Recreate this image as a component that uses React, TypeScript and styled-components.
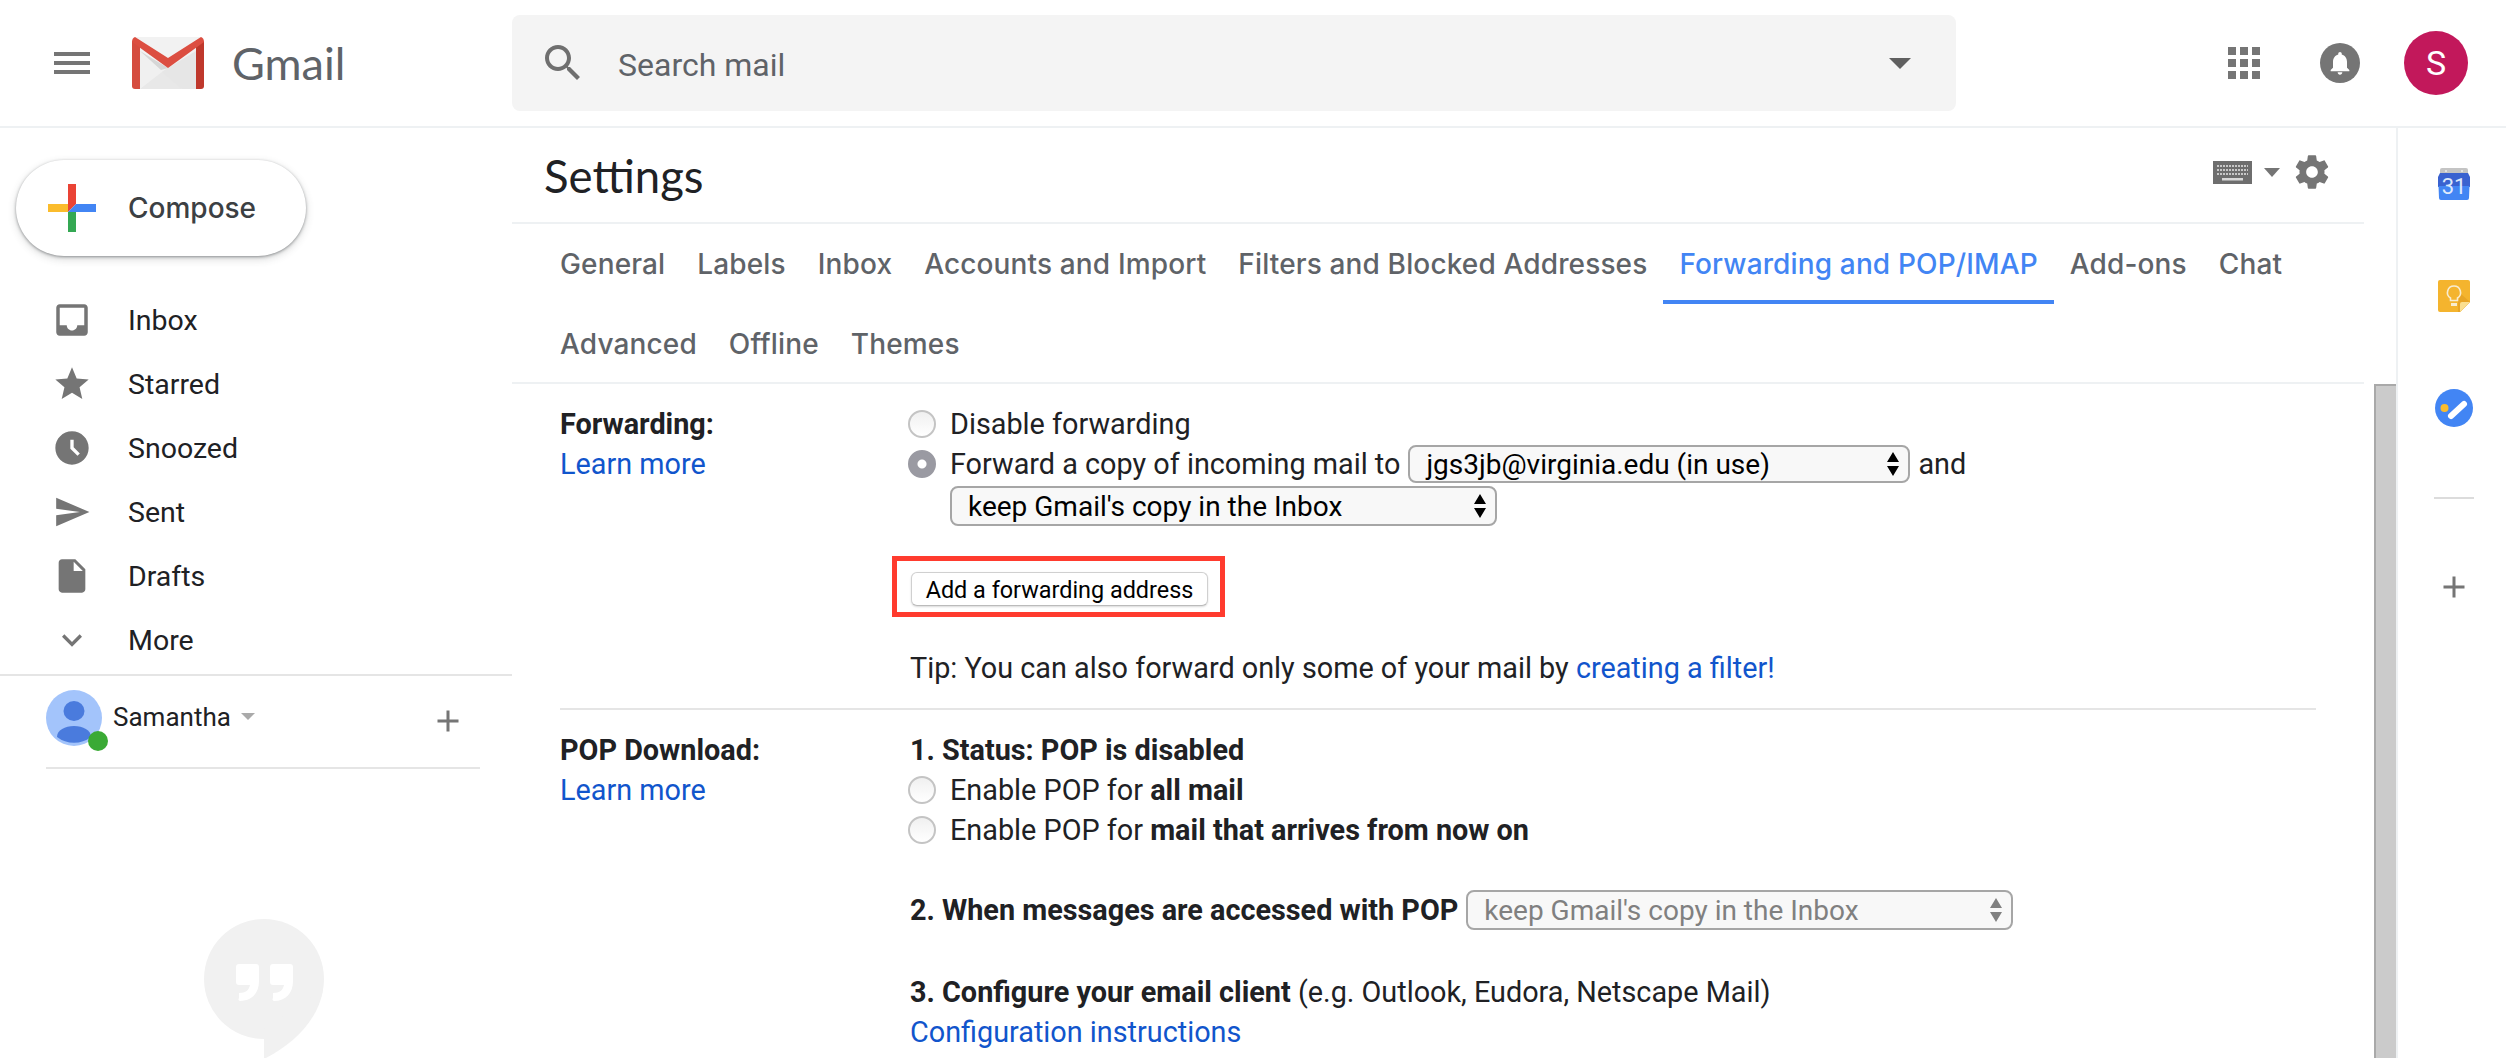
import styled, { createGlobalStyle } from 'styled-components';

const GlobalStyle = createGlobalStyle`
  html, body {
    margin: 0;
    padding: 0;
    background: #fff;
  }
  body {
    font-family: Roboto, "Liberation Sans", sans-serif;
    color: #202124;
  }
`;

const TABS = [
  'General',
  'Labels',
  'Inbox',
  'Accounts and Import',
  'Filters and Blocked Addresses',
  'Forwarding and POP/IMAP',
  'Add-ons',
  'Chat',
  'Advanced',
  'Offline',
  'Themes',
];

const NAV_ICONS: { label: string; size: number; d: string }[] = [
  {
    label: 'Inbox',
    size: 42,
    d: 'M19 3H4.99c-1.11 0-1.98.89-1.98 2L3 19c0 1.1.88 2 1.99 2H19c1.1 0 2-.9 2-2V5c0-1.11-.9-2-2-2zm0 12h-4c0 1.66-1.35 3-3 3s-3-1.34-3-3H4.99V5H19v10z',
  },
  {
    label: 'Starred',
    size: 40,
    d: 'M12 17.27L18.18 21l-1.64-7.03L22 9.24l-7.19-.61L12 2 9.19 8.63 2 9.24l5.46 4.73L5.82 21z',
  },
  {
    label: 'Snoozed',
    size: 40,
    d: 'M11.99 2C6.47 2 2 6.48 2 12s4.47 10 9.99 10C17.52 22 22 17.52 22 12S17.52 2 11.99 2zm3.3 14.71L11 12.41V7h2v4.59l3.71 3.71-1.42 1.41z',
  },
  { label: 'Sent', size: 38, d: 'M2.01 21L23 12 2.01 3 2 10l15 2-15 2z' },
  {
    label: 'Drafts',
    size: 40,
    d: 'M14 2H6c-1.1 0-2 .9-2 2v16c0 1.1.9 2 2 2h12c1.1 0 2-.9 2-2V8l-6-6zm-1 7V3.5L18.5 9H13z',
  },
  { label: 'More', size: 40, d: 'M7.41 8.59L12 13.17l4.59-4.58L18 10l-6 6-6-6z' },
];

const Icon = ({ d, size, color = '#757575' }: { d: string; size: number; color?: string }) => (
  <svg width={size} height={size} viewBox="0 0 24 24" fill={color}>
    <path d={d} />
  </svg>
);

const GmailLogo = () => (
  <svg width="72" height="52" viewBox="0 0 72 52">
    <rect x="2" width="68" height="52" rx="2" fill="#f2f2f2" />
    <path d="M8 52 L30 33 L36 31 L50 52Z" fill="#e8e8e8" />
    <path d="M8 14 L36 31 L30 35 L8 52Z" fill="#f0f0f0" />
    <path d="M36 31 L64 14 L64 52 L50 52 L30 35Z" fill="#e6e6e6" />
    <path d="M8 14 L36 31 L29 33Z" fill="#d6d6d6" />
    <path d="M0 4 L8 9 V52 H3 a3 3 0 0 1 -3 -3Z" fill="#d54c3f" />
    <path d="M72 4 L64 9 V52 H69 a3 3 0 0 0 3 -3Z" fill="#bf382c" />
    <path d="M3 0 L36 21 L69 0 Q72 1 72 5 L36 31 L0 5 Q0 1 3 0Z" fill="#dc4e41" />
  </svg>
);

const ComposePlus = () => (
  <svg width="48" height="48" viewBox="0 0 48 48">
    <path d="M20 0h8v20l-8 8z" fill="#ea4335" />
    <path d="M28 20h20v8H20z" fill="#4285f4" />
    <path d="M20 28h8v20h-8z" fill="#34a853" />
    <path d="M0 20h20v8H0z" fill="#fbbc2c" />
  </svg>
);

const UserAvatar = () => (
  <svg width="56" height="56" viewBox="0 0 56 56">
    <circle cx="28" cy="28" r="28" fill="#a3c4fb" />
    <ellipse cx="28" cy="21" rx="10.5" ry="10" fill="#4a7bdd" />
    <path d="M11 47 c0 -7 8 -11 17 -11 s17 4 17 11 a28 28 0 0 1 -34 0z" fill="#4a7bdd" />
  </svg>
);

const QUOTE = 'h17 a3 3 0 0 1 3 3 v14 c0 12 -7 20 -19 20 a2 2 0 0 1 -1 -3 v-5 c7 0 10 -3 11 -8 h-11 a3 3 0 0 1 -3 -3 v-15 a3 3 0 0 1 3 -3z';

const HangoutsBubble = () => (
  <svg width="120" height="140" viewBox="0 0 120 140">
    <circle cx="60" cy="60" r="60" fill="#f1f1f1" />
    <path d="M60 110 V140 C90 125 115 100 119 70Z" fill="#f1f1f1" />
    <path d={`M35 45 ${QUOTE}`} fill="#fff" />
    <path d={`M69 45 ${QUOTE}`} fill="#fff" />
  </svg>
);

const KeyboardGlyph = () => (
  <svg width="39" height="23" viewBox="0 0 39 23">
    <rect width="39" height="23" fill="#6e6e6e" />
    <path d="M4 5h31M4 9h31M4 13h31" stroke="#c8c8c8" strokeWidth="2" strokeDasharray="2 1" />
    <rect x="9" y="17" width="21" height="2.5" fill="#d8d8d8" />
  </svg>
);

const CalendarLogo = () => (
  <svg width="32" height="32" viewBox="0 0 32 32">
    <path d="M2 6V2a2 2 0 0 1 2-2h24a2 2 0 0 1 2 2v4z" fill="#c4c4c4" />
    <circle cx="8" cy="3" r="1" fill="#eee" />
    <circle cx="24" cy="3" r="1" fill="#eee" />
    <path d="M2 5h28l2 4v10H0V9z" fill="#3a62d0" />
    <path d="M0.5 18h31l-0.5 12a2 2 0 0 1-2 2H3a2 2 0 0 1-2-2z" fill="#4285f4" />
    <text x="16" y="26" textAnchor="middle" fontSize="22" fill="#dfe9fb" fontFamily="Roboto, sans-serif">
      31
    </text>
  </svg>
);

const KeepLogo = () => (
  <svg width="32" height="32" viewBox="0 0 32 32">
    <path d="M2 0h28a2 2 0 0 1 2 2v20L22 32H2a2 2 0 0 1-2-2V2a2 2 0 0 1 2-2z" fill="#f4b42e" />
    <path d="M32 22L22 32h-2V20l3-6z" fill="#e8a526" />
    <path d="M32 22H24a2 2 0 0 0-2 2v8z" fill="#fbdf90" />
    <path
      d="M16 6a6.5 6.5 0 0 0-3.5 12v2.5h7V18A6.5 6.5 0 0 0 16 6z"
      fill="none"
      stroke="#f8ecd0"
      strokeWidth="1.6"
    />
    <path d="M13 24.5h6" stroke="#f8ecd0" strokeWidth="3" />
  </svg>
);

const TasksLogo = () => (
  <svg width="38" height="38" viewBox="0 0 38 38">
    <circle cx="19" cy="19" r="19" fill="#4285f4" />
    <circle cx="9.5" cy="19" r="4" fill="#fbbc2c" />
    <path d="M16 27 L29 15" stroke="#fff" strokeWidth="6" strokeLinecap="round" />
  </svg>
);

const SelectArrows = ({ color }: { color: string }) => (
  <svg width="14" height="24" viewBox="0 0 14 24" fill={color}>
    <path d="M7 0l6 10H1zM7 24l-6-10h12z" />
  </svg>
);

const App = (): JSX.Element => {
  return (
    <Page>
      <GlobalStyle />
      <Header>
        <Brand>
          <MenuBars>
            <span />
            <span />
            <span />
          </MenuBars>
          <GmailLogo />
          <BrandName>Gmail</BrandName>
        </Brand>
        <SearchBar>
          <Icon
            size={48}
            color="#6f6f6f"
            d="M15.5 14h-.79l-.28-.27C15.41 12.59 16 11.11 16 9.5 16 5.91 13.09 3 9.5 3S3 5.91 3 9.5 5.91 16 9.5 16c1.61 0 3.09-.59 4.23-1.57l.27.28v.79l5 4.99L20.49 19l-4.99-5zm-6 0C7.01 14 5 11.99 5 9.5S7.01 5 9.5 5 14 7.01 14 9.5 11.99 14 9.5 14z"
          />
          <SearchText>Search mail</SearchText>
          <Caret $width={22} $height={11} $color="#5f5f5f" />
        </SearchBar>
        <HeaderActions>
          <AppGrid>
            {Array.from({ length: 9 }).map((_, i) => (
              <i key={i} />
            ))}
          </AppGrid>
          <BellCircle>
            <Icon
              size={28}
              color="#fff"
              d="M12 22c1.1 0 2-.9 2-2h-4c0 1.1.9 2 2 2zm6-6v-5c0-3.07-1.63-5.64-4.5-6.32V4c0-.83-.67-1.5-1.5-1.5s-1.5.67-1.5 1.5v.68C7.64 5.36 6 7.92 6 11v5l-2 2v1h16v-1l-2-2z"
            />
          </BellCircle>
          <ProfileCircle>S</ProfileCircle>
        </HeaderActions>
      </Header>

      <Body>
        <Sidebar>
          <ComposeButton>
            <ComposePlus />
            Compose
          </ComposeButton>
          <NavList>
            {NAV_ICONS.map((item) => (
              <NavRow key={item.label}>
                <NavIconBox>
                  <Icon d={item.d} size={item.size} />
                </NavIconBox>
                {item.label}
              </NavRow>
            ))}
          </NavList>
          <AccountRow>
            <AvatarWrap>
              <UserAvatar />
              <OnlineDot />
            </AvatarWrap>
            <AccountName>Samantha</AccountName>
            <AccountCaret>
              <Caret $width={14} $height={7} $color="#aaa" />
            </AccountCaret>
            <AccountPlus>
              <Icon size={36} color="#757575" d="M19 13h-6v6h-2v-6H5v-2h6V5h2v6h6v2z" />
            </AccountPlus>
          </AccountRow>
          <BubbleWrap>
            <HangoutsBubble />
          </BubbleWrap>
        </Sidebar>

        <Main>
          <TitleBar>
            <Title>Settings</Title>
            <TitleTools>
              <KeyboardGlyph />
              <Caret $width={16} $height={9} $color="#757575" />
              <Icon
                size={40}
                color="#757575"
                d="M19.43 12.98c.04-.32.07-.64.07-.98s-.03-.66-.07-.98l2.11-1.65c.19-.15.24-.42.12-.64l-2-3.46c-.12-.22-.39-.3-.61-.22l-2.49 1c-.52-.4-1.08-.73-1.69-.98l-.38-2.65C14.46 2.18 14.25 2 14 2h-4c-.25 0-.46.18-.49.42l-.38 2.65c-.61.25-1.17.59-1.69.98l-2.49-1c-.23-.09-.49 0-.61.22l-2 3.46c-.13.22-.07.49.12.64l2.11 1.65c-.04.32-.07.65-.07.98s.03.66.07.98l-2.11 1.65c-.19.15-.24.42-.12.64l2 3.46c.12.22.39.3.61.22l2.49-1c.52.4 1.08.73 1.69.98l.38 2.65c.03.24.24.42.49.42h4c.25 0 .46-.18.49-.42l.38-2.65c.61-.25 1.17-.59 1.69-.98l2.49 1c.23.09.49 0 .61-.22l2-3.46c.12-.22.07-.49-.12-.64l-2.11-1.65zM12 15.5c-1.93 0-3.5-1.57-3.5-3.5s1.57-3.5 3.5-3.5 3.5 1.57 3.5 3.5-1.57 3.5-3.5 3.5z"
              />
            </TitleTools>
          </TitleBar>
          <TabBar>
            {TABS.map((tab) => (
              <Tab key={tab} $active={tab === 'Forwarding and POP/IMAP'}>
                {tab}
              </Tab>
            ))}
          </TabBar>
          <ContentRow>
            <SettingsPane>
              <Section $divided>
                <div>
                  <Line>
                    <strong>Forwarding:</strong>
                  </Line>
                  <Line>
                    <Link>Learn more</Link>
                  </Line>
                </div>
                <div>
                  <Line>
                    <Radio />
                    Disable forwarding
                  </Line>
                  <Line>
                    <Radio $checked />
                    Forward a copy of incoming mail to
                    <FakeSelect $width={502} $height={38} $gap="8px">
                      jgs3jb@virginia.edu (in use)
                      <SelectArrows color="#000" />
                    </FakeSelect>
                    <AndWord>and</AndWord>
                  </Line>
                  <IndentedLine>
                    <FakeSelect $width={547} $height={40}>
                      keep Gmail's copy in the Inbox
                      <SelectArrows color="#000" />
                    </FakeSelect>
                  </IndentedLine>
                  <Highlight>
                    <AddButton>Add a forwarding address</AddButton>
                  </Highlight>
                  <Line>
                    Tip: You can also forward only some of your mail by&nbsp;<Link>creating a filter!</Link>
                  </Line>
                </div>
              </Section>
              <Section>
                <div>
                  <Line>
                    <strong>POP Download:</strong>
                  </Line>
                  <Line>
                    <Link>Learn more</Link>
                  </Line>
                </div>
                <div>
                  <Line>
                    <strong>1. Status: POP is disabled</strong>
                  </Line>
                  <Line>
                    <Radio />
                    Enable POP for&nbsp;<strong>all mail</strong>
                  </Line>
                  <Line>
                    <Radio />
                    Enable POP for&nbsp;<strong>mail that arrives from now on</strong>
                  </Line>
                  <SpacedLine $top={40}>
                    <strong>2. When messages are accessed with POP</strong>
                    <FakeSelect $width={547} $height={40} $gap="8px" $disabled>
                      keep Gmail's copy in the Inbox
                      <SelectArrows color="#808080" />
                    </FakeSelect>
                  </SpacedLine>
                  <SpacedLine $top={42}>
                    <strong>3. Configure your email client</strong>&nbsp;(e.g. Outlook, Eudora, Netscape Mail)
                  </SpacedLine>
                  <Line>
                    <Link>Configuration instructions</Link>
                  </Line>
                </div>
              </Section>
            </SettingsPane>
            <ScrollThumb />
          </ContentRow>
        </Main>

        <AddOnRail>
          <RailItem>
            <CalendarLogo />
          </RailItem>
          <RailItem>
            <KeepLogo />
          </RailItem>
          <RailItem>
            <TasksLogo />
          </RailItem>
          <RailDivider />
          <RailPlus>
            <Icon size={36} color="#757575" d="M19 13h-6v6h-2v-6H5v-2h6V5h2v6h6v2z" />
          </RailPlus>
        </AddOnRail>
      </Body>
    </Page>
  );
};

const Page = styled.div`
  width: 2506px;
  height: 1058px;
  overflow: hidden;
  display: flex;
  flex-direction: column;
`;

const Header = styled.header`
  height: 126px;
  flex: none;
  display: flex;
  align-items: center;
  border-bottom: 2px solid #eef1f3;
`;
const Brand = styled.div`
  width: 512px;
  flex: none;
  display: flex;
  align-items: center;
  padding-left: 54px;
  box-sizing: border-box;
`;
const MenuBars = styled.div`
  width: 36px;
  margin-right: 42px;
  display: flex;
  flex-direction: column;
  gap: 5px;
  span {
    height: 4px;
    background: #757575;
  }
`;
const BrandName = styled.span`
  margin-left: 28px;
  font-family: Lato, sans-serif;
  font-size: 45px;
  color: #5f6368;
`;
const SearchBar = styled.div`
  width: 1444px;
  height: 96px;
  flex: none;
  display: flex;
  align-items: center;
  padding: 0 45px 0 27px;
  box-sizing: border-box;
  background: #f4f4f4;
  border-radius: 8px;
`;
const SearchText = styled.span`
  flex: 1;
  margin-left: 31px;
  padding-top: 3px;
  font-size: 32px;
  color: #5f6368;
`;
const Caret = styled.i<{ $width: number; $height: number; $color: string }>`
  display: block;
  flex: none;
  width: 0;
  height: 0;
  border-left: ${(props) => props.$width / 2}px solid transparent;
  border-right: ${(props) => props.$width / 2}px solid transparent;
  border-top: ${(props) => props.$height}px solid ${(props) => props.$color};
`;
const HeaderActions = styled.div`
  flex: 1;
  display: flex;
  align-items: center;
  padding-left: 272px;
`;
const AppGrid = styled.div`
  display: grid;
  grid-template-columns: repeat(3, 8px);
  grid-auto-rows: 8px;
  gap: 4px;
  i {
    background: #757575;
  }
`;
const BellCircle = styled.div`
  width: 40px;
  height: 40px;
  margin-left: 60px;
  border-radius: 50%;
  background: #757575;
  display: flex;
  align-items: center;
  justify-content: center;
`;
const ProfileCircle = styled.div`
  width: 64px;
  height: 64px;
  margin-left: 44px;
  border-radius: 50%;
  background: #c2185b;
  color: #fff;
  font-size: 34px;
  display: flex;
  align-items: center;
  justify-content: center;
`;

const Body = styled.div`
  flex: 1;
  display: flex;
  min-height: 0;
`;

const Sidebar = styled.aside`
  width: 512px;
  flex: none;
  padding-top: 32px;
  box-sizing: border-box;
`;
const ComposeButton = styled.button`
  width: 290px;
  height: 96px;
  margin-left: 16px;
  padding: 0 0 0 32px;
  display: flex;
  align-items: center;
  gap: 32px;
  border: none;
  border-radius: 48px;
  background: #fff;
  box-shadow: 0 1px 3px rgba(60, 64, 67, 0.5), 0 3px 8px rgba(60, 64, 67, 0.2);
  font-family: Inter, sans-serif;
  font-weight: 500;
  font-size: 28px;
  color: #3c4043;
`;
const NavList = styled.nav`
  margin-top: 32px;
`;
const NavRow = styled.div`
  height: 64px;
  display: flex;
  align-items: center;
  font-size: 28.5px;
  color: #202124;
`;
const NavIconBox = styled.span`
  width: 144px;
  margin-right: -16px;
  display: flex;
  justify-content: center;
`;
const AccountRow = styled.div`
  height: 93px;
  margin: 2px 32px 0 46px;
  display: flex;
  align-items: flex-start;
  border-bottom: 2px solid #e5e5e5;
  position: relative;
  &::before {
    content: '';
    position: absolute;
    top: 0;
    left: -46px;
    width: 512px;
    height: 2px;
    background: #e5e5e5;
  }
`;
const AvatarWrap = styled.div`
  position: relative;
  margin-top: 16px;
  height: 56px;
`;
const OnlineDot = styled.span`
  position: absolute;
  right: -6px;
  bottom: -5px;
  width: 20px;
  height: 20px;
  border-radius: 50%;
  background: #3aaa35;
`;
const AccountName = styled.span`
  margin: 27px 10px 0 11px;
  font-size: 26px;
  line-height: 32px;
  color: #202124;
`;
const AccountCaret = styled.span`
  margin-top: 39px;
`;
const AccountPlus = styled.span`
  margin-left: auto;
  margin-right: 14px;
  margin-top: 29px;
`;
const BubbleWrap = styled.div`
  margin: 150px 0 0 204px;
  height: 140px;
`;

const Main = styled.main`
  flex: 1;
  min-width: 0;
  display: flex;
  flex-direction: column;
`;
const TitleBar = styled.div`
  height: 94px;
  margin-right: 32px;
  padding: 0 32px 0 32px;
  display: flex;
  align-items: center;
  justify-content: space-between;
  border-bottom: 2px solid #eef1f3;
`;
const Title = styled.h1`
  margin: 0;
  font-family: Lato, sans-serif;
  font-weight: 400;
  font-size: 45.5px;
  color: #202124;
`;
const TitleTools = styled.div`
  display: flex;
  align-items: center;
  gap: 12px;
  margin-bottom: 6px;
`;
const TabBar = styled.div`
  height: 160px;
  box-sizing: border-box;
  margin-right: 32px;
  padding-left: 32px;
  display: flex;
  flex-wrap: wrap;
  align-content: flex-start;
  border-bottom: 2px solid #eef1f3;
`;
const Tab = styled.div<{ $active?: boolean }>`
  height: 80px;
  padding: 4px 16px 0;
  box-sizing: border-box;
  display: flex;
  align-items: center;
  font-family: Inter, sans-serif;
  font-weight: 500;
  font-size: 28px;
  letter-spacing: 0.14px;
  color: ${(props) => (props.$active ? '#4285f4' : '#5f6368')};
  border-bottom: 4px solid ${(props) => (props.$active ? '#4285f4' : 'transparent')};
`;
const ContentRow = styled.div`
  flex: 1;
  min-height: 0;
  display: flex;
`;
const SettingsPane = styled.div`
  flex: 1;
  padding: 0 58px 0 48px;
`;
const ScrollThumb = styled.div`
  width: 22px;
  flex: none;
  box-sizing: border-box;
  background: #cbcbcb;
  border-left: 2px solid #a9a9a9;
  border-top: 2px solid #a9a9a9;
`;
const Section = styled.section<{ $divided?: boolean }>`
  display: grid;
  grid-template-columns: 350px 1fr;
  padding: 20px 0;
  border-bottom: ${(props) => (props.$divided ? '2px solid #e5e5e5' : 'none')};
`;
const Line = styled.div`
  height: 40px;
  display: flex;
  align-items: center;
  white-space: pre;
  font-size: 28.8px;
  color: #202124;
  strong {
    font-weight: 700;
  }
`;
const IndentedLine = styled(Line)`
  margin: 2px 0 0 40px;
`;
const SpacedLine = styled(Line)<{ $top: number }>`
  margin-top: ${(props) => props.$top}px;
`;
const Link = styled.a`
  color: #1155cc;
`;
const Radio = styled.span<{ $checked?: boolean }>`
  width: 28px;
  height: 28px;
  margin: 0 14px 0 -2px;
  flex: none;
  box-sizing: border-box;
  border-radius: 50%;
  background: ${(props) =>
    props.$checked ? 'radial-gradient(circle, #fff 0 4px, #9a9aa2 5px)' : 'linear-gradient(#f0f0f0, #fff)'};
  border: 2px solid ${(props) => (props.$checked ? '#9a9aa2' : '#c4c4c4')};
`;
const FakeSelect = styled.div<{ $width: number; $height: number; $gap?: string; $disabled?: boolean }>`
  width: ${(props) => props.$width}px;
  height: ${(props) => props.$height}px;
  margin-left: ${(props) => props.$gap || 0};
  padding: 0 8px 0 16px;
  box-sizing: border-box;
  display: flex;
  align-items: center;
  justify-content: space-between;
  border: 2px solid #a6a6a6;
  border-radius: 8px;
  background: #f8f8f8;
  font-size: 28px;
  color: ${(props) => (props.$disabled ? '#808080' : '#000')};
`;
const AndWord = styled.span`
  margin-left: 8px;
`;
const Highlight = styled.div`
  width: fit-content;
  margin: 30px 0 31px -18px;
  padding: 11px 12px 6px 14px;
  border: 5px solid #ff3b2e;
`;
const AddButton = styled.button`
  display: block;
  width: 297px;
  height: 34px;
  padding: 2px 0 0;
  border: 1px solid #d0d0d0;
  border-bottom-color: #bbb;
  border-radius: 6px;
  background: #fff;
  box-shadow: 0 1px 2px rgba(0, 0, 0, 0.15);
  font-family: Roboto, sans-serif;
  font-size: 23.4px;
  color: #000;
`;

const AddOnRail = styled.aside`
  width: 110px;
  flex: none;
  box-sizing: border-box;
  padding-left: 4px;
  border-left: 2px solid #eef1f3;
  display: flex;
  flex-direction: column;
  align-items: center;
`;
const RailItem = styled.div`
  height: 112px;
  display: flex;
  align-items: center;
`;
const RailDivider = styled.div`
  width: 40px;
  height: 2px;
  margin-top: 33px;
  background: #dcdcdc;
`;
const RailPlus = styled.div`
  margin-top: 70px;
`;

export default App;
